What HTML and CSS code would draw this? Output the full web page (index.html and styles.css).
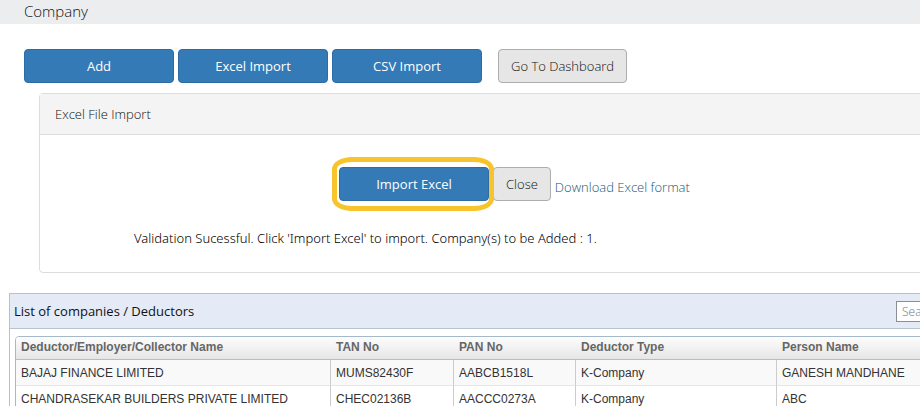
FILE: index.html
```html
<!DOCTYPE html>
<html lang="en">
<head>
  <meta charset="UTF-8">
  <title>Company</title>
  <link rel="stylesheet" href="styles.css">
</head>
<body>
  <header class="page-header">
    <h1>Company</h1>
  </header>

  <div class="toolbar">
    <button type="button" class="btn btn-primary">Add</button>
    <button type="button" class="btn btn-primary">Excel Import</button>
    <button type="button" class="btn btn-primary">CSV Import</button>
    <button type="button" class="btn btn-default dashboard">Go To Dashboard</button>
  </div>

  <section class="import-panel">
    <h2 class="import-heading">Excel File Import</h2>
    <div class="import-body">
      <div class="import-actions">
        <span class="highlight">
          <button type="button" class="btn btn-primary">Import Excel</button>
        </span>
        <button type="button" class="btn btn-default">Close</button>
        <a href="#" class="download">Download Excel format</a>
      </div>
      <p class="message">Validation Sucessful. Click 'Import Excel' to import. Company(s) to be Added : 1.</p>
    </div>
  </section>

  <section class="list-panel">
    <div class="list-heading">
      <h2>List of companies / Deductors</h2>
      <input type="text" class="search" placeholder="Search" aria-label="Search">
    </div>
    <div class="grid">
      <table>
        <colgroup>
          <col class="col-name">
          <col class="col-tan">
          <col class="col-pan">
          <col class="col-type">
          <col>
        </colgroup>
        <thead>
          <tr>
            <th>Deductor/Employer/Collector Name</th>
            <th>TAN No</th>
            <th>PAN No</th>
            <th>Deductor Type</th>
            <th>Person Name</th>
          </tr>
        </thead>
        <tbody>
          <tr>
            <td>BAJAJ FINANCE LIMITED</td>
            <td>MUMS82430F</td>
            <td>AABCB1518L</td>
            <td>K-Company</td>
            <td>GANESH MANDHANE</td>
          </tr>
          <tr>
            <td>CHANDRASEKAR BUILDERS PRIVATE LIMITED</td>
            <td>CHEC02136B</td>
            <td>AACCC0273A</td>
            <td>K-Company</td>
            <td>ABC</td>
          </tr>
        </tbody>
      </table>
    </div>
  </section>
</body>
</html>
```
FILE: styles.css
```css
* {
  box-sizing: border-box;
}
html {
  overflow: hidden;
}
body {
  margin: 0;
  background: #fff;
  color: #111;
  font-family: "Open Sans", "Noto Sans", sans-serif;
  font-size: 13px;
  font-weight: 300;
  line-height: 20px;
}
h1, h2, p {
  margin: 0;
  font-size: 13px;
  font-weight: 300;
}
.page-header {
  padding: 0 24px 2px;
  background: #ecedef;
}
.page-header h1 {
  font-size: 15px;
  line-height: 22px;
}
.toolbar {
  display: flex;
  gap: 4px;
  padding: 25px 24px 10px;
}
.btn {
  height: 34px;
  padding: 0 12px;
  border: 1px solid #adadad;
  border-radius: 4px;
  font: inherit;
  white-space: nowrap;
  cursor: pointer;
}
.btn-primary {
  width: 150px;
  background: #337ab7;
  border-color: #2e6da4;
  color: #fff;
  font-weight: 400;
}
.btn-default {
  background: #e6e6e6;
  color: #111;
}
.dashboard {
  margin-left: 12px;
}

/* both panels run on past the right side of the window */
.import-panel {
  margin: 0 -110px 0 39px;
  border: 1px solid #ddd;
  border-radius: 4px;
}
.import-heading {
  padding: 10px 15px;
  background: #f4f4f4;
  border-bottom: 1px solid #ddd;
  color: #111;
}
.import-body {
  padding: 32px 94px 24px;
}
.import-actions {
  display: flex;
  align-items: center;
  gap: 4px;
  padding-left: 205px;
}
.highlight {
  position: relative;
  display: flex;
}
.highlight::after {
  content: "";
  position: absolute;
  inset: -10px -5px -10px -7px;
  border: 5px solid #f7c52b;
  border-radius: 20px / 12px;
  pointer-events: none;
}
.download {
  padding-top: 6px;
  color: #1b5675;
  text-decoration: none;
}
.message {
  padding-top: 27px;
  color: #000;
  font-family: "Noto Sans", "Open Sans", sans-serif;
}

.list-panel {
  margin: 20px -110px 0 9px;
  border: 1px solid #b9c0c9;
}
.list-heading {
  display: flex;
  align-items: center;
  justify-content: space-between;
  height: 35px;
  padding: 0 3px 0 4px;
  background: #e4ebf7;
  border-bottom: 1px solid #b9c3cf;
}
.list-heading h2 {
  color: #111;
  font-weight: 400;
}
.search {
  width: 130px;
  height: 21px;
  padding: 0 5px;
  border: 1px solid #8a8f96;
  background: #fff;
  font: inherit;
  font-size: 12px;
}
.grid {
  margin: 7px 5px;
  border: 1px solid #a6b9cb;
  border-radius: 4px;
  overflow: hidden;
}
.grid table {
  width: 100%;
  border-collapse: separate;
  border-spacing: 0;
  table-layout: fixed;
  color: #333;
  font-family: "Liberation Sans", Arial, sans-serif;
  font-size: 12px;
  font-weight: 400;
  line-height: 20px;
}
.col-name {
  width: 315px;
}
.col-tan {
  width: 123px;
}
.col-pan {
  width: 122px;
}
.col-type {
  width: 201px;
}
.grid th,
.grid td {
  padding: 0 5px;
  text-align: left;
  white-space: nowrap;
}
.grid th {
  height: 23px;
  border-bottom: 1px solid #bbb;
  background: linear-gradient(#fdfdfd, #e6e6e6);
  color: #666;
  line-height: 20px;
  vertical-align: top;
}
.grid td {
  height: 26px;
  border-right: 1px solid #ccc;
  border-bottom: 1px solid #e6e6e6;
}
.grid tbody tr:nth-child(odd) {
  background: #f9f9f9;
}
```
